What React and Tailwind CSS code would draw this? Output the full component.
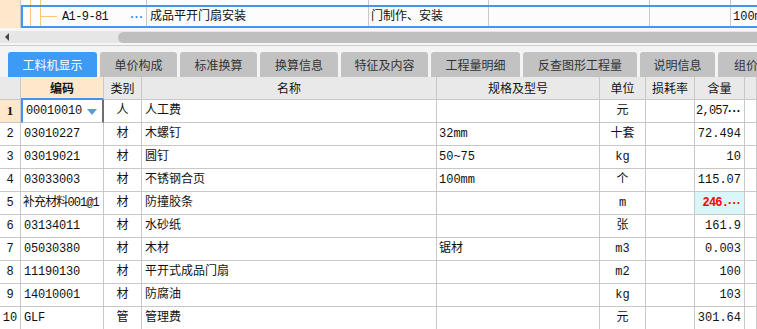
const rows = [
  { no: '1', code: '00010010', type: '人', name: '人工费', spec: '', unit: '元', qty: '2,057', more: true },
  { no: '2', code: '03010227', type: '材', name: '木螺钉', spec: '32mm', unit: '十套', qty: '72.494' },
  { no: '3', code: '03019021', type: '材', name: '圆钉', spec: '50~75', unit: 'kg', qty: '10' },
  { no: '4', code: '03033003', type: '材', name: '不锈钢合页', spec: '100mm', unit: '个', qty: '115.07' },
  { no: '5', code: '补充材料001@1', type: '材', name: '防撞胶条', spec: '', unit: 'm', qty: '246.', more: true, hot: true },
  { no: '6', code: '03134011', type: '材', name: '水砂纸', spec: '', unit: '张', qty: '161.9' },
  { no: '7', code: '05030380', type: '材', name: '木材', spec: '锯材', unit: 'm3', qty: '0.003' },
  { no: '8', code: '11190130', type: '材', name: '平开式成品门扇', spec: '', unit: 'm2', qty: '100' },
  { no: '9', code: '14010001', type: '材', name: '防腐油', spec: '', unit: 'kg', qty: '103' },
  { no: '10', code: 'GLF', type: '管', name: '管理费', spec: '', unit: '元', qty: '301.64' },
];

const tabs = [
  { label: '工料机显示', w: 'w-[89px]', active: true },
  { label: '单价构成', w: 'w-[77px]' },
  { label: '标准换算', w: 'w-[77px]' },
  { label: '换算信息', w: 'w-[78px]' },
  { label: '特征及内容', w: 'w-[87px]' },
  { label: '工程量明细', w: 'w-[89px]' },
  { label: '反查图形工程量', w: 'w-[114px]' },
  { label: '说明信息', w: 'w-[75px]' },
  { label: '组价方案', w: 'w-[80px]' },
];

const cols = 'grid grid-cols-[21px_83px_38px_295px_163px_46px_49px_50px_12px]';
const cell = 'h-[23px] border-r border-b border-[#c8c8c8] flex items-center overflow-hidden whitespace-nowrap';

const App = () => {
  return (
    <div className="w-[757px] h-[329px] overflow-hidden bg-white text-[12px] text-[#111] font-['Liberation_Mono','Noto_Sans_CJK_SC',monospace]">
      {/* current item row */}
      <div className="relative h-[28px] flex bg-[#fcfcfc] whitespace-nowrap">
        <div className="w-[21px] shrink-0 bg-[#fde8cc] border-r border-[#c8c8c8]" />
        <div className="w-[126px] shrink-0 relative flex items-center border-r border-[#c8c8c8] pt-[5px]">
          <div className="absolute left-[9px] top-0 bottom-0 w-px bg-[#fdc77a]" />
          <div className="absolute left-[19px] top-0 bottom-0 w-px bg-[#fdc77a]" />
          <div className="absolute left-[19px] top-[16px] w-[17px] h-px bg-[#fdc77a]" />
          <span className="ml-[41px] tracking-[-0.6px]">A1-9-81</span>
          <span className="ml-[22px] text-[#3d8ef0] font-black font-['Liberation_Sans',sans-serif] tracking-[0.5px]">···</span>
        </div>
        <div className="w-[222px] shrink-0 border-r border-[#c8c8c8] flex items-center pl-[3px] pt-[5px]">成品平开门扇安装</div>
        <div className="w-[120px] shrink-0 border-r border-[#c8c8c8] flex items-center pl-[2px] pt-[5px]">门制作、安装</div>
        <div className="w-[161px] shrink-0 border-r border-[#c8c8c8]" />
        <div className="w-[81px] shrink-0 border-r border-[#c8c8c8]" />
        <div className="flex items-center pl-[2px] pt-[5px]">100m</div>
        <div className="absolute left-[21px] top-[5px] w-[760px] h-[23px] border-2 border-[#4593ee]" />
      </div>

      {/* horizontal scrollbar */}
      <div className="h-[17px] bg-[#f6f6f6] pt-[3px]">
        <div className="h-[12px] bg-[#e6e6e6] flex items-center">
          <div className="w-0 h-0 ml-[5px] border-y-[4px] border-y-transparent border-r-[4px] border-r-[#444]" />
          <div className="ml-[109px] flex-1 h-[11px] rounded-l-[6px] bg-[#bfbfbf]" />
        </div>
      </div>

      {/* tabs */}
      <div className="h-[32px] border-t border-[#cdcdcd] bg-[#f4f4f4] flex items-end pl-[8px] gap-[3px] font-['Noto_Sans_CJK_SC',sans-serif] text-[12px] whitespace-nowrap">
        {tabs.map((t) => (
          <div
            key={t.label}
            className={`${t.w} shrink-0 h-[25px] rounded-t-[3px] flex items-center justify-center ${
              t.active ? 'bg-[#3d9af5] text-white' : 'bg-[#c2c2c2] text-[#333]'
            }`}
          >
            {t.label}
          </div>
        ))}
      </div>

      {/* table header */}
      <div className={`${cols} bg-[#e9e9e9] font-['Noto_Sans_CJK_SC',sans-serif]`}>
        <div className={cell} />
        <div className={`${cell} justify-center bg-[#fde8cc] font-bold border-b-2 border-b-[#4593ee]`}>编码</div>
        <div className={`${cell} justify-center`}>类别</div>
        <div className={`${cell} justify-center`}>名称</div>
        <div className={`${cell} justify-center`}>规格及型号</div>
        <div className={`${cell} justify-center`}>单位</div>
        <div className={`${cell} justify-center`}>损耗率</div>
        <div className={`${cell} justify-center`}>含量</div>
        <div className={cell} />
      </div>

      {/* table body */}
      {rows.map((r, i) => (
        <div key={r.no} className={cols}>
          <div
            className={`${cell} justify-center ${
              i === 0 ? "bg-[#fde8cc] font-bold font-['Liberation_Serif',serif] text-[13px]" : ''
            }`}
          >
            {r.no}
          </div>
          <div
            className={`${cell} relative ${r.hot ? 'pl-[2px] tracking-[-0.9px]' : 'pl-[3px] tracking-[-0.2px]'} ${
              i === 0 ? 'border-l-2 border-l-[#4593ee] border-r-2 border-r-[#6f6f6f] pl-[1px]' : ''
            }`}
          >
            {r.code}
            {i === 0 && (
              <div className="absolute right-[5px] top-[9px] w-0 h-0 border-x-[5px] border-x-transparent border-t-[6px] border-t-[#5b9bd8]" />
            )}
          </div>
          <div className={`${cell} justify-center`}>{r.type}</div>
          <div className={`${cell} pl-[3px]`}>{r.name}</div>
          <div className={`${cell} pl-[2px]`}>{r.spec}</div>
          <div className={`${cell} justify-center`}>{r.unit}</div>
          <div className={cell} />
          <div
            className={`${cell} justify-end pr-[3px] ${
              r.hot ? 'bg-[#d9f6f8] text-[#ff0000] font-bold' : ''
            }`}
          >
            <span className={r.more ? 'tracking-[-0.8px]' : ''}>{r.qty}</span>
            {r.more && (
              <span className="font-['Liberation_Sans',sans-serif] font-black tracking-[0.3px]">···</span>
            )}
          </div>
          <div className={cell} />
        </div>
      ))}
    </div>
  );
};

export default App;
